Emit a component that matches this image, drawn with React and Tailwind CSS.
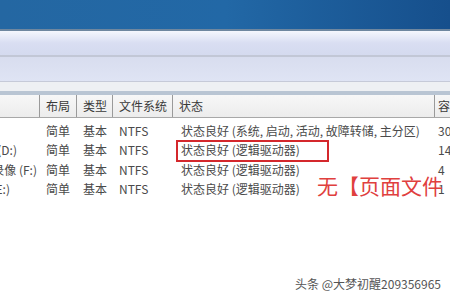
import React from 'react';

const font = { fontFamily: '"Noto Sans CJK SC", "Noto Sans", sans-serif' };

const rows = [
  { name: '', namePad: 'pr-[3px]', layout: '简单', type: '基本', fs: 'NTFS', status: '状态良好 (系统, 启动, 活动, 故障转储, 主分区)', size: '30' },
  { name: '新加卷 (D:)', namePad: 'pr-[23px]', layout: '简单', type: '基本', fs: 'NTFS', status: '状态良好 (逻辑驱动器)', size: '14' },
  { name: '录像 (F:)', namePad: 'pr-[3px]', layout: '简单', type: '基本', fs: 'NTFS', status: '状态良好 (逻辑驱动器)', size: '4' },
  { name: '新加卷 (E:)', namePad: 'pr-[30px]', layout: '简单', type: '基本', fs: 'NTFS', status: '状态良好 (逻辑驱动器)', size: '1' },
];

const HeadCell = ({ className, children }) => (
  <div className={`h-full flex items-center pl-[6px] border-r border-[#9a9a9a] overflow-hidden whitespace-nowrap ${className}`}>
    {children}
  </div>
);

const App = () => {
  return (
    <div className="relative w-[450px] h-[300px] overflow-hidden bg-white text-[12px] text-[#4a4a4a]" style={font}>
      {/* title bar */}
      <div className="h-[29px] bg-gradient-to-r from-[#2467a2] via-[#2268a6] to-[#164f8c]" />
      <div className="h-[2px] bg-[#6f879f]" />
      {/* toolbars */}
      <div className="h-[24px] bg-gradient-to-b from-[#f5f7fd] via-[#d9def2] to-[#d4daef]" />
      <div className="h-[2px] bg-[#c2c7d6]" />
      <div className="h-[24px] bg-gradient-to-b from-[#d8ddef] to-[#dfe4f4]" />
      <div className="h-[1px] bg-[#c6cad8]" />
      <div className="h-[9px] bg-[#eef0f3]" />
      <div className="h-[4px] bg-[#b9c5d3]" />

      {/* header */}
      <div className="flex h-[23px] bg-gradient-to-b from-[#f7f7f7] to-[#ececec] border-b border-[#a8a8a8] text-[#3a3a3a]">
        <HeadCell className="w-[40px]" />
        <HeadCell className="w-[37px]">布局</HeadCell>
        <HeadCell className="w-[36px]">类型</HeadCell>
        <HeadCell className="w-[60px]">文件系统</HeadCell>
        <HeadCell className="w-[262px]">状态</HeadCell>
        <div className="flex-1 flex items-center pl-[3px] overflow-hidden whitespace-nowrap">容量</div>
      </div>

      {/* rows */}
      <div className="flex flex-col pt-[3px]">
        {rows.map((r, i) => (
          <div key={i} className="flex h-[19.5px] items-center whitespace-nowrap">
            <div className="w-[40px] overflow-hidden">
              <div className={`flex justify-end ${r.namePad}`}>{r.name}</div>
            </div>
            <div className="w-[37px] pl-[6px]">{r.layout}</div>
            <div className="w-[36px] pl-[6px]">{r.type}</div>
            <div className="w-[60px] pl-[6px]">{r.fs}</div>
            <div className="w-[262px] pl-[8px]">{r.status}</div>
            <div className="flex-1 pl-[3px] overflow-hidden">{r.size}</div>
          </div>
        ))}
      </div>

      {/* annotation box */}
      <div className="absolute left-[176px] top-[140px] w-[153px] h-[22px] border-2 border-[#d4282c]" />
      <div className="absolute left-[317px] top-[175px] text-[21px] leading-none text-[#e0403e] whitespace-nowrap">
        无【页面文件
      </div>

      {/* watermark */}
      <div className="absolute right-[9px] bottom-[7px] text-[12px] text-[#555] whitespace-nowrap">
        头条 @大梦初醒209356965
      </div>
    </div>
  );
};

export default App;
